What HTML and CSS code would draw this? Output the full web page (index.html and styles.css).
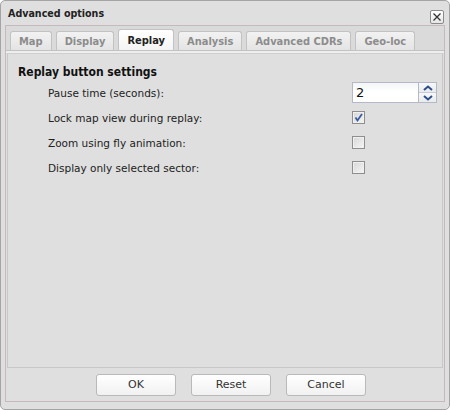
FILE: index.html
```html
<!DOCTYPE html>
<html>
<head>
<meta charset="utf-8">
<link rel="stylesheet" href="styles.css">
</head>
<body>
<div class="window">
  <div class="titlebar">
    <span class="title">Advanced options</span>
    <span class="close">
      <svg width="12" height="12" viewBox="0 0 12 12"><path d="M2.5 2.5 L9.5 9.5 M9.5 2.5 L2.5 9.5" stroke="#333" stroke-width="1.3" fill="none"/></svg>
    </span>
  </div>
  <div class="frame">
    <div class="tabbar">
      <span class="tab">Map</span>
      <span class="tab">Display</span>
      <span class="tab active">Replay</span>
      <span class="tab">Analysis</span>
      <span class="tab">Advanced CDRs</span>
      <span class="tab">Geo-loc</span>
    </div>
    <div class="strip"></div>
    <div class="panel">
      <div class="heading">Replay button settings</div>
      <div class="rows">
        <span class="label">Pause time (seconds):</span>
        <span class="spinner">
          <span class="spin-input">2</span>
          <span class="spin-btns">
            <span class="spin-btn"><svg width="10" height="6" viewBox="0 0 10 6"><path d="M1 5 L5 1.5 L9 5" stroke="#2c4e8a" stroke-width="2" fill="none"/></svg></span>
            <span class="spin-btn"><svg width="10" height="6" viewBox="0 0 10 6"><path d="M1 1 L5 4.5 L9 1" stroke="#2c4e8a" stroke-width="2" fill="none"/></svg></span>
          </span>
        </span>
        <span class="label">Lock map view during replay:</span>
        <span class="checkbox checked">
          <svg width="11" height="11" viewBox="0 0 11 11"><path d="M2.5 5.5 L4.5 8.5 L9 2" stroke="#3b5a9e" stroke-width="1.8" fill="none"/></svg>
        </span>
        <span class="label">Zoom using fly animation:</span>
        <span class="checkbox"></span>
        <span class="label">Display only selected sector:</span>
        <span class="checkbox"></span>
      </div>
    </div>
    <div class="buttons">
      <span class="btn">OK</span>
      <span class="btn">Reset</span>
      <span class="btn">Cancel</span>
    </div>
  </div>
</div>
</body>
</html>
```
FILE: styles.css
```css
html, body {
  margin: 0;
  padding: 0;
  background: #ffffff;
}
body {
  font-family: "DejaVu Sans", Verdana, sans-serif;
  font-size: 10.5px;
  color: #222;
}
.window {
  width: 450px;
  height: 410px;
  box-sizing: border-box;
  border: 1px solid #a4a4a4;
  border-radius: 5px;
  background: #dfdfdf;
  display: flex;
  flex-direction: column;
  padding: 0 4px 7px 4px;
}
.titlebar {
  height: 24px;
  display: flex;
  align-items: center;
  justify-content: space-between;
  padding: 0 1px 0 3px;
}
.title {
  font-family: "DejaVu Sans Condensed", "DejaVu Sans", sans-serif;
  font-weight: bold;
  font-size: 10.6px;
  color: #222;
  margin-top: -1px;
}
.close {
  width: 12px;
  height: 12px;
  border: 1px solid #8a8a8a;
  border-radius: 2px;
  background: linear-gradient(#ffffff, #e6e6e6);
  display: flex;
  align-items: center;
  justify-content: center;
  margin-top: 7px;
}
.frame {
  flex: 1;
  border: 1px solid #c6b8bb;
  display: flex;
  flex-direction: column;
  background: #dfdfdf;
}
.tabbar {
  height: 24px;
  display: flex;
  align-items: flex-end;
  gap: 4px;
  padding-left: 4px;
  background: #dadada;
}
.tab {
  height: 19px;
  box-sizing: border-box;
  border: 1px solid #c2c2c2;
  border-bottom: none;
  border-radius: 3px 3px 0 0;
  background: linear-gradient(#f2f2f2, #e4e4e4);
  color: #8c8c8c;
  font-family: "DejaVu Sans Condensed", "DejaVu Sans", sans-serif;
  font-weight: bold;
  font-size: 11px;
  white-space: nowrap;
  padding: 0 8px;
  display: flex;
  align-items: center;
}
.tab.active {
  height: 21px;
  background: linear-gradient(#ffffff, #f4f4f4);
  color: #222;
}
.strip {
  height: 2px;
  border-top: 1px solid #c2c2c2;
  background: #eeeeee;
}
.panel {
  flex: 1;
  margin: 0 1px;
  border: 1px solid #c8c8c8;
  border-top-color: #cfcfcf;
  background: #dfdfdf;
  padding: 10px 9px 0 10px;
}
.heading {
  font-family: "DejaVu Sans Condensed", "DejaVu Sans", sans-serif;
  font-weight: bold;
  font-size: 12px;
  color: #111;
  line-height: 16px;
}
.rows {
  padding-left: 30px;
  display: grid;
  grid-template-columns: 304px auto;
  grid-auto-rows: 25px;
  align-items: center;
  justify-items: start;
}
.label {
  color: #222;
}
.spinner {
  display: flex;
  width: 85px;
  height: 21px;
  box-sizing: border-box;
  border: 1px solid #b5b8c8;
}
.spin-input {
  flex: 1;
  background: linear-gradient(#f3f6f6, #ffffff 45%);
  font-size: 13px;
  color: #111;
  padding-left: 3px;
  display: flex;
  align-items: center;
}
.spin-btns {
  width: 17px;
  display: flex;
  flex-direction: column;
  border-left: 1px solid #b5b8c8;
}
.spin-btn {
  flex: 1;
  display: flex;
  align-items: center;
  justify-content: center;
  background: linear-gradient(#f8f8f8, #e8ecec);
}
.spin-btn + .spin-btn {
  border-top: 1px solid #c8ccd6;
}
.checkbox {
  width: 13px;
  height: 13px;
  box-sizing: border-box;
  border: 1px solid #8e8e8e;
  background: linear-gradient(135deg, #d6d6d6, #f6f6f6);
  box-shadow: inset 0 0 0 1px #f0f0f0;
  display: flex;
  align-items: center;
  justify-content: center;
}
.buttons {
  height: 33px;
  display: flex;
  align-items: center;
  justify-content: center;
  gap: 15px;
  padding-left: 12px;
}
.btn {
  width: 80px;
  height: 22px;
  box-sizing: border-box;
  border: 1px solid #b9b9b9;
  border-radius: 3px;
  background: linear-gradient(#ffffff, #f1f1f1);
  display: flex;
  align-items: center;
  justify-content: center;
  font-size: 11px;
  color: #333;
}
```
